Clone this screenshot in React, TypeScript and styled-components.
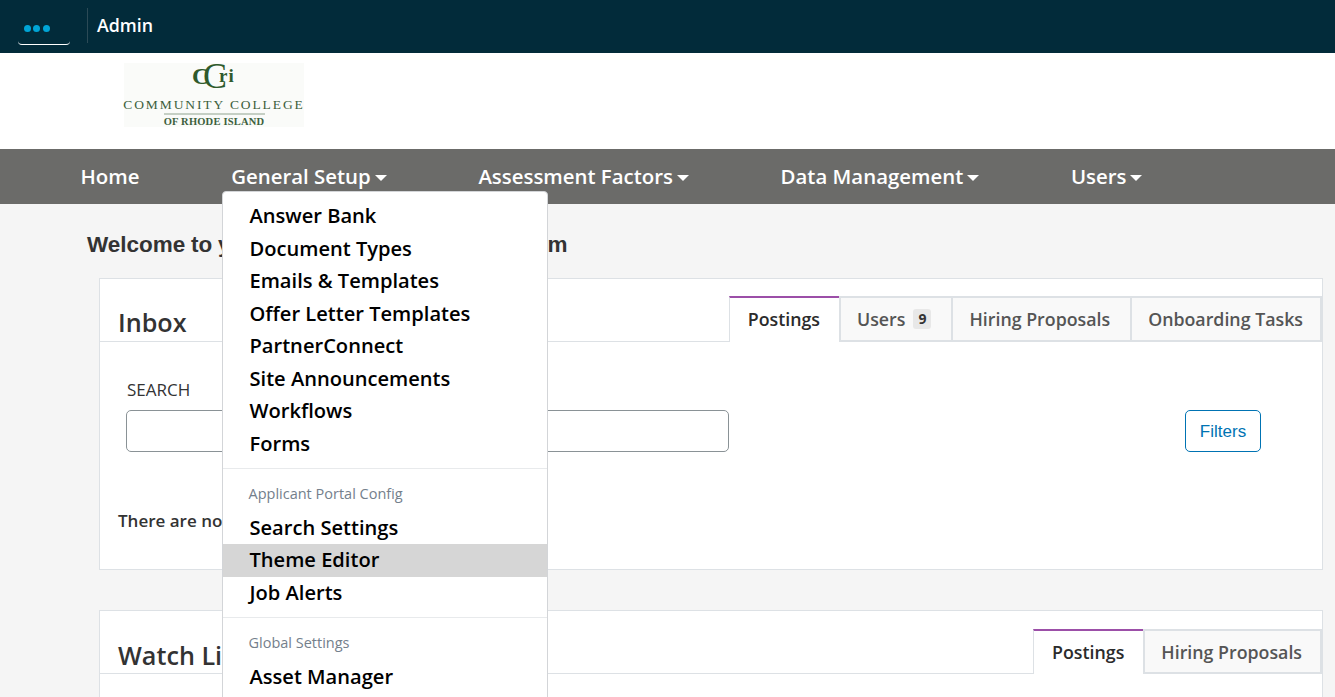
import React from 'react';
import styled, {createGlobalStyle} from 'styled-components';

const GlobalStyle = createGlobalStyle`
  html, body {
    margin: 0;
    height: 100%;
    overflow: hidden;
    background: #f5f5f5;
    font-family: "Open Sans", "Noto Sans", sans-serif;
  }
`;

const TopBar = styled.header`
  display: flex;
  align-items: flex-start;
  height: 53px;
  background: #022b3a;
  padding-left: 18px;
`;

const AppSwitcher = styled.div`
  display: flex;
  gap: 2.3px;
  align-items: center;
  width: 52px;
  height: 33px;
  margin: 12px 17px 0 0;
  box-sizing: border-box;
  padding-left: 6px;
  border-bottom: 1px solid #fff;
  border-radius: 0 0 4px 4px;
`;

const Dot = styled.span`
  width: 7px;
  height: 7px;
  border-radius: 50%;
  background: #00a5d6;
`;

const AppName = styled.div`
  margin-top: 8px;
  border-left: 1px solid #2b4a56;
  height: 35px;
  line-height: 35px;
  padding-left: 9px;
  color: #fff;
  font-size: 17.8px;
  font-weight: 600;
`;

const LogoRow = styled.div`
  height: 96px;
  background: #fff;
  padding: 10px 0 0 124px;
  box-sizing: border-box;
`;

const Logo = styled.div`
  width: 180px;
  height: 64px;
  background: #fafbf9;
  display: flex;
  flex-direction: column;
  align-items: center;
  color: #3d5f3d;
  font-family: "Liberation Serif", serif;
`;

const LogoMark = styled.svg`
  display: block;
  flex-shrink: 0;
  overflow: visible;
  margin: 0 0 8px 2px;
`;

const LogoName = styled.div`
  font-size: 13.5px;
  letter-spacing: 1.9px;
  line-height: 14px;
  white-space: nowrap;
`;

const LogoRule = styled.div`
  width: 101px;
  height: 2px;
  flex-shrink: 0;
  background: #c5cfc4;
  margin: 1px 0;
`;

const LogoPlace = styled.div`
  font-size: 10.5px;
  font-weight: 700;
  letter-spacing: 0.2px;
  line-height: 11px;
  white-space: nowrap;
`;

const MainNav = styled.nav`
  display: flex;
  gap: 91.7px;
  height: 55px;
  box-sizing: border-box;
  padding: 0 0 2px 80.5px;
  align-items: center;
  background: #6b6b69;
`;

const NavItem = styled.div<{$caret?: boolean}>`
  position: relative;
  color: #fff;
  font-size: 20.4px;
  font-weight: 600;
  white-space: nowrap;

  ${props => props.$caret && `
    &::after {
      content: "";
      display: inline-block;
      margin-left: 4px;
      vertical-align: 3px;
      border-top: 6px solid #fff;
      border-left: 6px solid transparent;
      border-right: 6px solid transparent;
    }
  `}
`;

const Dropdown = styled.div`
  position: absolute;
  top: 29px;
  left: -8.7px;
  width: 326px;
  box-sizing: border-box;
  padding: 8.6px 0;
  background: #fff;
  border: 1px solid #d3d5d8;
  border-radius: 4px;
  z-index: 5;
`;

const MenuItem = styled.div<{$active?: boolean}>`
  height: 32.5px;
  line-height: 32.5px;
  padding-left: 26px;
  color: #000;
  font-size: 20.1px;
  font-weight: 600;
  background: ${props => (props.$active ? '#d6d6d6' : 'transparent')};
`;

const MenuDivider = styled.div`
  height: 1px;
  margin: 8px 0;
  background: #e8eaec;
`;

const MenuHeader = styled.div`
  height: 34.5px;
  line-height: 34.5px;
  padding-left: 25px;
  color: #74808c;
  font-size: 14.5px;
  font-weight: 400;
`;

const Content = styled.main`
  padding: 27px 12px 0 87px;
`;

const Welcome = styled.h1`
  margin: 0 0 19px;
  color: #333;
  font-family: "Liberation Sans", Arial, sans-serif;
  font-size: 22.5px;
  line-height: 28px;
  font-weight: 700;
  word-spacing: -0.6px;
  white-space: nowrap;
`;

const Panel = styled.section`
  margin: 0 0 40px 12px;
  background: #fff;
  border: 1px solid #dde1e5;
`;

const PanelHeader = styled.div`
  display: flex;
  justify-content: space-between;
  align-items: flex-end;
  height: 62px;
  border-bottom: 1px solid #dde1e5;
`;

const PanelTitle = styled.h2<{$low?: boolean}>`
  margin: 0 0 ${props => (props.$low ? '0' : '1px')} 18px;
  color: #333;
  font-size: 25.2px;
  line-height: 36px;
  font-weight: 600;
`;

const Tabs = styled.div`
  display: flex;
  margin-bottom: -1px;
`;

const Tab = styled.div<{$active?: boolean; $short?: boolean}>`
  display: flex;
  align-items: center;
  gap: 8px;
  height: ${props => (props.$short ? '45px' : '46px')};
  box-sizing: border-box;
  padding: 0 ${props => (props.$active ? '19px' : '20px')} ${props => (props.$active ? '2px' : '0')} ${props => (props.$active ? '18px' : '16px')};
  font-size: 17.8px;
  font-weight: 600;
  color: ${props => (props.$active ? '#2b2b2b' : '#555')};
  background: ${props => (props.$active ? '#fff' : '#f9f9f9')};
  border-left: ${props => (props.$active ? '1px' : '2px')} solid #dde1e5;
  border-top: 2px solid ${props => (props.$active ? '#9c4fa8' : '#dde1e5')};
  border-bottom: ${props => (props.$active ? '0' : '2px solid #dde1e5')};

  &:last-child {
    border-right: 2px solid #dde1e5;
    padding-right: ${props => (props.$short ? '18px' : '17px')};
  }
`;

const Badge = styled.span`
  padding: 0 5px;
  background: #e8e8e8;
  border-radius: 3px;
  color: #333;
  font-size: 14px;
  line-height: 20px;
  font-weight: 700;
`;

const PanelBody = styled.div`
  height: 227px;
  box-sizing: border-box;
  padding: 36px 61px 0 26px;
`;

const SearchRow = styled.div`
  display: flex;
  justify-content: space-between;
  align-items: flex-end;
`;

const SearchLabel = styled.label`
  display: block;
  margin: 0 0 8px 1px;
  color: #333;
  font-size: 17px;
  line-height: 24px;
`;

const SearchInput = styled.div`
  width: 603px;
  height: 42px;
  box-sizing: border-box;
  border: 1px solid #8a9296;
  border-radius: 5px;
  background: #fff;
`;

const FiltersButton = styled.button`
  width: 76px;
  height: 42px;
  padding: 1px 0 0;
  background: #fff;
  border: 1px solid #0073b3;
  border-radius: 5px;
  color: #0073b3;
  font-family: "Liberation Sans", Arial, sans-serif;
  font-size: 17px;
`;

const EmptyText = styled.p`
  margin: 57px 0 0 -8px;
  color: #333;
  font-size: 17px;
  line-height: 24px;
  font-weight: 600;
`;

const generalSetup = [
  'Answer Bank',
  'Document Types',
  'Emails & Templates',
  'Offer Letter Templates',
  'PartnerConnect',
  'Site Announcements',
  'Workflows',
  'Forms',
];

function App() {
  return (
    <>
      <GlobalStyle />
      <TopBar>
        <AppSwitcher>
          <Dot />
          <Dot />
          <Dot />
        </AppSwitcher>
        <AppName>Admin</AppName>
      </TopBar>
      <LogoRow>
        <Logo>
          <LogoMark width="46" height="27" viewBox="0 0 46 27">
            <g fill="#2f5a2c" fontFamily="Liberation Serif">
              <text x="0" y="21" fontSize="24" fontWeight="700">C</text>
              <text x="11" y="24.5" fontSize="36">C</text>
              <text x="27" y="19" fontSize="19" fontWeight="700" letterSpacing="1">ri</text>
            </g>
          </LogoMark>
          <LogoName>COMMUNITY COLLEGE</LogoName>
          <LogoRule />
          <LogoPlace>OF RHODE ISLAND</LogoPlace>
        </Logo>
      </LogoRow>
      <MainNav>
        <NavItem>Home</NavItem>
        <NavItem $caret>
          General Setup
          <Dropdown>
            {generalSetup.map(name => (
              <MenuItem key={name}>{name}</MenuItem>
            ))}
            <MenuDivider />
            <MenuHeader>Applicant Portal Config</MenuHeader>
            <MenuItem>Search Settings</MenuItem>
            <MenuItem $active>Theme Editor</MenuItem>
            <MenuItem>Job Alerts</MenuItem>
            <MenuDivider />
            <MenuHeader>Global Settings</MenuHeader>
            <MenuItem>Asset Manager</MenuItem>
          </Dropdown>
        </NavItem>
        <NavItem $caret>Assessment Factors</NavItem>
        <NavItem $caret>Data Management</NavItem>
        <NavItem $caret>Users</NavItem>
      </MainNav>
      <Content>
        <Welcome>Welcome to your application tracking system</Welcome>
        <Panel>
          <PanelHeader>
            <PanelTitle>Inbox</PanelTitle>
            <Tabs>
              <Tab $active>Postings</Tab>
              <Tab>
                Users <Badge>9</Badge>
              </Tab>
              <Tab>Hiring Proposals</Tab>
              <Tab>Onboarding Tasks</Tab>
            </Tabs>
          </PanelHeader>
          <PanelBody>
            <SearchRow>
              <div>
                <SearchLabel>SEARCH</SearchLabel>
                <SearchInput />
              </div>
              <FiltersButton>Filters</FiltersButton>
            </SearchRow>
            <EmptyText>There are no items in your inbox.</EmptyText>
          </PanelBody>
        </Panel>
        <Panel>
          <PanelHeader>
            <PanelTitle $low>Watch List</PanelTitle>
            <Tabs>
              <Tab $active $short>Postings</Tab>
              <Tab $short>Hiring Proposals</Tab>
            </Tabs>
          </PanelHeader>
          <PanelBody />
        </Panel>
      </Content>
    </>
  );
}

export default App;
